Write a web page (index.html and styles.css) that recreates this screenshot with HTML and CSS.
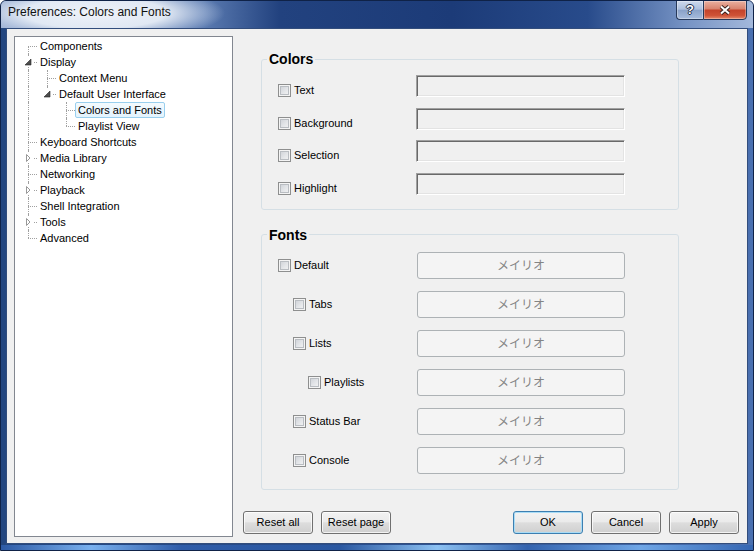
FILE: index.html
```html
<!DOCTYPE html>
<html>
<head>
<meta charset="utf-8">
<title>Preferences: Colors and Fonts</title>
<link rel="stylesheet" href="styles.css">
</head>
<body>
<div class="window">
  <div class="titlebar">
    <div class="title">Preferences: Colors and Fonts</div>
    <div class="caption-btns">
      <div class="cbtn help"><span class="qmark">?</span></div>
      <div class="cbtn close">
        <svg width="12" height="10" viewBox="0 0 12 10"><path d="M2,1.5 L10,8.5 M10,1.5 L2,8.5" stroke="#3a2420" stroke-width="4" fill="none"/><path d="M2,1.5 L10,8.5 M10,1.5 L2,8.5" stroke="#ffffff" stroke-width="2" fill="none"/></svg>
      </div>
    </div>
  </div>
  <div class="client">
    <div class="tree">
      <div class="row"><span class="g first"></span><span class="lbl">Components</span></div>
      <div class="row"><span class="g tee"><i class="exp"><svg width="9" height="10" viewBox="0 0 9 10"><polygon points="7,2 7,8 1,8" fill="#4d4d4d" stroke="#262626" stroke-width="0.6"/></svg></i></span><span class="lbl">Display</span></div>
      <div class="row"><span class="g pipe"></span><span class="g tee"></span><span class="lbl">Context Menu</span></div>
      <div class="row"><span class="g pipe"></span><span class="g elbow"><i class="exp"><svg width="9" height="10" viewBox="0 0 9 10"><polygon points="7,2 7,8 1,8" fill="#4d4d4d" stroke="#262626" stroke-width="0.6"/></svg></i></span><span class="lbl">Default User Interface</span></div>
      <div class="row"><span class="g pipe"></span><span class="g"></span><span class="g tee"></span><span class="lbl sel">Colors and Fonts</span></div>
      <div class="row"><span class="g pipe"></span><span class="g"></span><span class="g elbow"></span><span class="lbl">Playlist View</span></div>
      <div class="row"><span class="g tee"></span><span class="lbl">Keyboard Shortcuts</span></div>
      <div class="row"><span class="g tee"><i class="exp"><svg width="9" height="10" viewBox="0 0 9 10"><polygon points="2.5,1.5 6,5 2.5,8.5" fill="#ffffff" stroke="#989898" stroke-width="1"/></svg></i></span><span class="lbl">Media Library</span></div>
      <div class="row"><span class="g tee"></span><span class="lbl">Networking</span></div>
      <div class="row"><span class="g tee"><i class="exp"><svg width="9" height="10" viewBox="0 0 9 10"><polygon points="2.5,1.5 6,5 2.5,8.5" fill="#ffffff" stroke="#989898" stroke-width="1"/></svg></i></span><span class="lbl">Playback</span></div>
      <div class="row"><span class="g tee"></span><span class="lbl">Shell Integration</span></div>
      <div class="row"><span class="g tee"><i class="exp"><svg width="9" height="10" viewBox="0 0 9 10"><polygon points="2.5,1.5 6,5 2.5,8.5" fill="#ffffff" stroke="#989898" stroke-width="1"/></svg></i></span><span class="lbl">Tools</span></div>
      <div class="row"><span class="g elbow"></span><span class="lbl">Advanced</span></div>
    </div>

    <div class="main">
      <fieldset class="group colors">
        <legend>Colors</legend>
        <div class="crow"><label class="chk l0"><span class="cb"></span>Text</label><div class="swatch"></div></div>
        <div class="crow"><label class="chk l0"><span class="cb"></span>Background</label><div class="swatch"></div></div>
        <div class="crow"><label class="chk l0"><span class="cb"></span>Selection</label><div class="swatch"></div></div>
        <div class="crow"><label class="chk l0"><span class="cb"></span>Highlight</label><div class="swatch"></div></div>
      </fieldset>

      <fieldset class="group fonts">
        <legend>Fonts</legend>
        <div class="frow"><label class="chk l0"><span class="cb"></span>Default</label><button class="fontbtn">メイリオ</button></div>
        <div class="frow"><label class="chk l1"><span class="cb"></span>Tabs</label><button class="fontbtn">メイリオ</button></div>
        <div class="frow"><label class="chk l1"><span class="cb"></span>Lists</label><button class="fontbtn">メイリオ</button></div>
        <div class="frow"><label class="chk l2"><span class="cb"></span>Playlists</label><button class="fontbtn">メイリオ</button></div>
        <div class="frow"><label class="chk l1"><span class="cb"></span>Status Bar</label><button class="fontbtn">メイリオ</button></div>
        <div class="frow"><label class="chk l1"><span class="cb"></span>Console</label><button class="fontbtn">メイリオ</button></div>
      </fieldset>

      <div class="actions">
        <div class="bgroup">
          <button class="btn">Reset all</button>
          <button class="btn">Reset page</button>
        </div>
        <div class="bgroup">
          <button class="btn default">OK</button>
          <button class="btn">Cancel</button>
          <button class="btn">Apply</button>
        </div>
      </div>
    </div>
  </div>
</div>
</body>
</html>
```

FILE: styles.css
```css
* { box-sizing: border-box; }
html, body { margin: 0; padding: 0; }
body {
  width: 754px;
  height: 551px;
  overflow: hidden;
  background: #ffffff;
  font-family: "Liberation Sans", Arial, sans-serif;
  font-size: 11px;
  color: #000;
}

.window {
  width: 754px;
  height: 551px;
  display: flex;
  flex-direction: column;
  border: 1px solid #0f2247;
  border-radius: 6px 6px 0 0;
  overflow: hidden;
  background:
    linear-gradient(90deg, #2d5aa5 0%, #79b0ee 12%, #2f5ca8 24%, #2a57a0 45%, #8cc1f2 58%, #3463ae 70%, #6fa6e6 85%, #3566b2 100%) left bottom / 100% 5px no-repeat,
    linear-gradient(90deg, #23467f 0%, #2b4f8e 50%, #4a70b0 100%);
}

/* ---------- title bar ---------- */
.titlebar {
  height: 27px;
  flex-shrink: 0;
  display: flex;
  justify-content: space-between;
  align-items: flex-start;
  padding-right: 6px;
  background:
    radial-gradient(ellipse 130px 28px at 94px 12px, rgba(238,242,249,1) 0%, rgba(228,235,245,0.97) 55%, rgba(196,210,232,0.55) 80%, rgba(160,182,215,0) 100%),
    linear-gradient(90deg, #93a9cf 0%, #5b7bb1 27%, #22427f 37%, #1c3b78 60%, #284b8b 78%, #7693c4 91%, #a3b8db 100%);
}
.title {
  padding: 4px 0 0 7px;
  font-size: 12px;
  line-height: 14px;
  color: #111;
}
.caption-btns {
  display: flex;
  margin-top: -1px;
}
.cbtn {
  height: 20px;
  border: 1px solid #26395a;
  display: flex;
  align-items: center;
  justify-content: center;
}
.help {
  width: 27px;
  border-right: none;
  border-radius: 0 0 0 4px;
  background: linear-gradient(#cdd9ec 0%, #adc0de 45%, #8aa2c9 52%, #a7bcdd 100%);
  box-shadow: inset 0 0 0 1px rgba(255,255,255,0.35);
}
.qmark {
  font: bold 13px/14px "Liberation Sans", Arial, sans-serif;
  color: #fff;
  text-shadow: 1px 0 #1c2a45, -1px 0 #1c2a45, 0 1px #1c2a45, 0 -1px #1c2a45;
}
.close {
  width: 44px;
  border-radius: 0 0 4px 0;
  background: linear-gradient(#eab0a0 0%, #d98570 42%, #c4442b 52%, #cf5236 80%, #e58a6c 100%);
  box-shadow: inset 0 0 0 1px rgba(255,255,255,0.3);
}
.close svg { display: block; }

/* ---------- client area ---------- */
.client {
  flex: 1;
  display: flex;
  gap: 10px;
  margin: 0 5px 6px 5px;
  border: 1px solid #324d7c;
  background: #f0f0f0;
  padding: 7px 8px 6px 7px;
  min-height: 0;
}

/* ---------- tree ---------- */
.tree {
  width: 219px;
  flex-shrink: 0;
  border: 1px solid #828790;
  background: #fff;
  padding: 1px 0 0 3px;
}
.row {
  display: flex;
  height: 16px;
}
.g {
  position: relative;
  display: inline-block;
  width: 19px;
  height: 16px;
  flex-shrink: 0;
}
.g::before, .g::after { content: none; }
.pipe::before, .tee::before, .elbow::before, .first::before {
  content: "";
  position: absolute;
  left: 10px;
  border-left: 1px dotted #a0a0a0;
}
.pipe::before, .tee::before { top: 0; bottom: 0; }
.elbow::before { top: 0; height: 8px; }
.first::before { top: 8px; bottom: 0; }
.tee::after, .elbow::after, .first::after {
  content: "";
  position: absolute;
  left: 10px;
  right: 0;
  top: 8px;
  border-top: 1px dotted #a0a0a0;
}
.exp {
  position: absolute;
  left: 6px;
  top: 3px;
  width: 9px;
  height: 10px;
  background: #fff;
  z-index: 1;
}
.exp svg { display: block; }
.lbl {
  display: inline-block;
  height: 16px;
  line-height: 14px;
  padding: 0 2px;
  border: 1px solid transparent;
  white-space: nowrap;
}
.lbl.sel {
  border-color: #99cfee;
  border-radius: 2px;
  background: linear-gradient(#f4fafe, #e3f3fd);
}

/* ---------- main ---------- */
.main {
  flex: 1;
  display: flex;
  flex-direction: column;
  min-width: 0;
}
.group {
  margin: 15px 0 0 18px;
  width: 418px;
  min-width: 0;
  border: 1px solid #d5dfe5;
  border-radius: 3px;
  display: flex;
  flex-direction: column;
}
.group legend {
  padding: 0 2px;
  font: bold 14px/16px "Liberation Sans", Arial, sans-serif;
  color: #000;
}
.colors {
  padding: 8px 0 14px 5px;
  gap: 10.67px;
}
.fonts {
  margin-top: 17px;
  padding: 9px 0 15px 5px;
  gap: 12px;
}

.crow {
  display: flex;
  align-items: flex-start;
  height: 22px;
}
.crow .chk {
  width: 149px;
  margin-top: 9px;
}
.frow {
  display: flex;
  align-items: center;
  height: 27px;
}
.frow .chk { width: 150px; }

.chk {
  display: flex;
  align-items: center;
  gap: 3px;
  height: 13px;
  line-height: 13px;
  white-space: nowrap;
}
.l0 { padding-left: 11px; }
.l1 { padding-left: 26px; }
.l2 { padding-left: 41px; }
.cb {
  width: 13px;
  height: 13px;
  flex-shrink: 0;
  border: 1px solid #8e8f8f;
  background: linear-gradient(135deg, #c9cdd3 0%, #e4e6e9 55%, #f7f7f7 100%);
  box-shadow: inset 0 0 0 1px #f4f4f4, inset 0 0 0 2px #b9bdc2;
}

.swatch {
  width: 209px;
  height: 22px;
  border: 1px solid;
  border-color: #a0a0a0 #ffffff #ffffff #a0a0a0;
  box-shadow: inset 1px 1px 0 #696969, inset -1px -1px 0 #e3e3e3;
  background: #f0f0f0;
}

.fontbtn {
  width: 208px;
  height: 27px;
  padding: 0;
  border: 1px solid #adb2b5;
  border-radius: 3px;
  background: #f4f4f4;
  color: #848484;
  font: 12px/14px "Noto Sans CJK JP", sans-serif;
}

/* ---------- buttons ---------- */
.actions {
  margin-top: auto;
  margin-bottom: 3px;
  display: flex;
  justify-content: space-between;
}
.bgroup {
  display: flex;
  gap: 8px;
}
.btn {
  width: 70px;
  height: 23px;
  padding: 0;
  border: 1px solid #707070;
  border-radius: 3px;
  background: linear-gradient(#f2f2f2 0%, #ebebeb 46%, #dddddd 52%, #cfcfcf 100%);
  box-shadow: inset 0 0 0 1px rgba(255,255,255,0.75);
  font: 11px/13px "Liberation Sans", Arial, sans-serif;
  color: #000;
}
.btn.default {
  border-color: #3c7fb1;
  box-shadow: inset 0 0 0 1px #a9dcf6;
}
```
